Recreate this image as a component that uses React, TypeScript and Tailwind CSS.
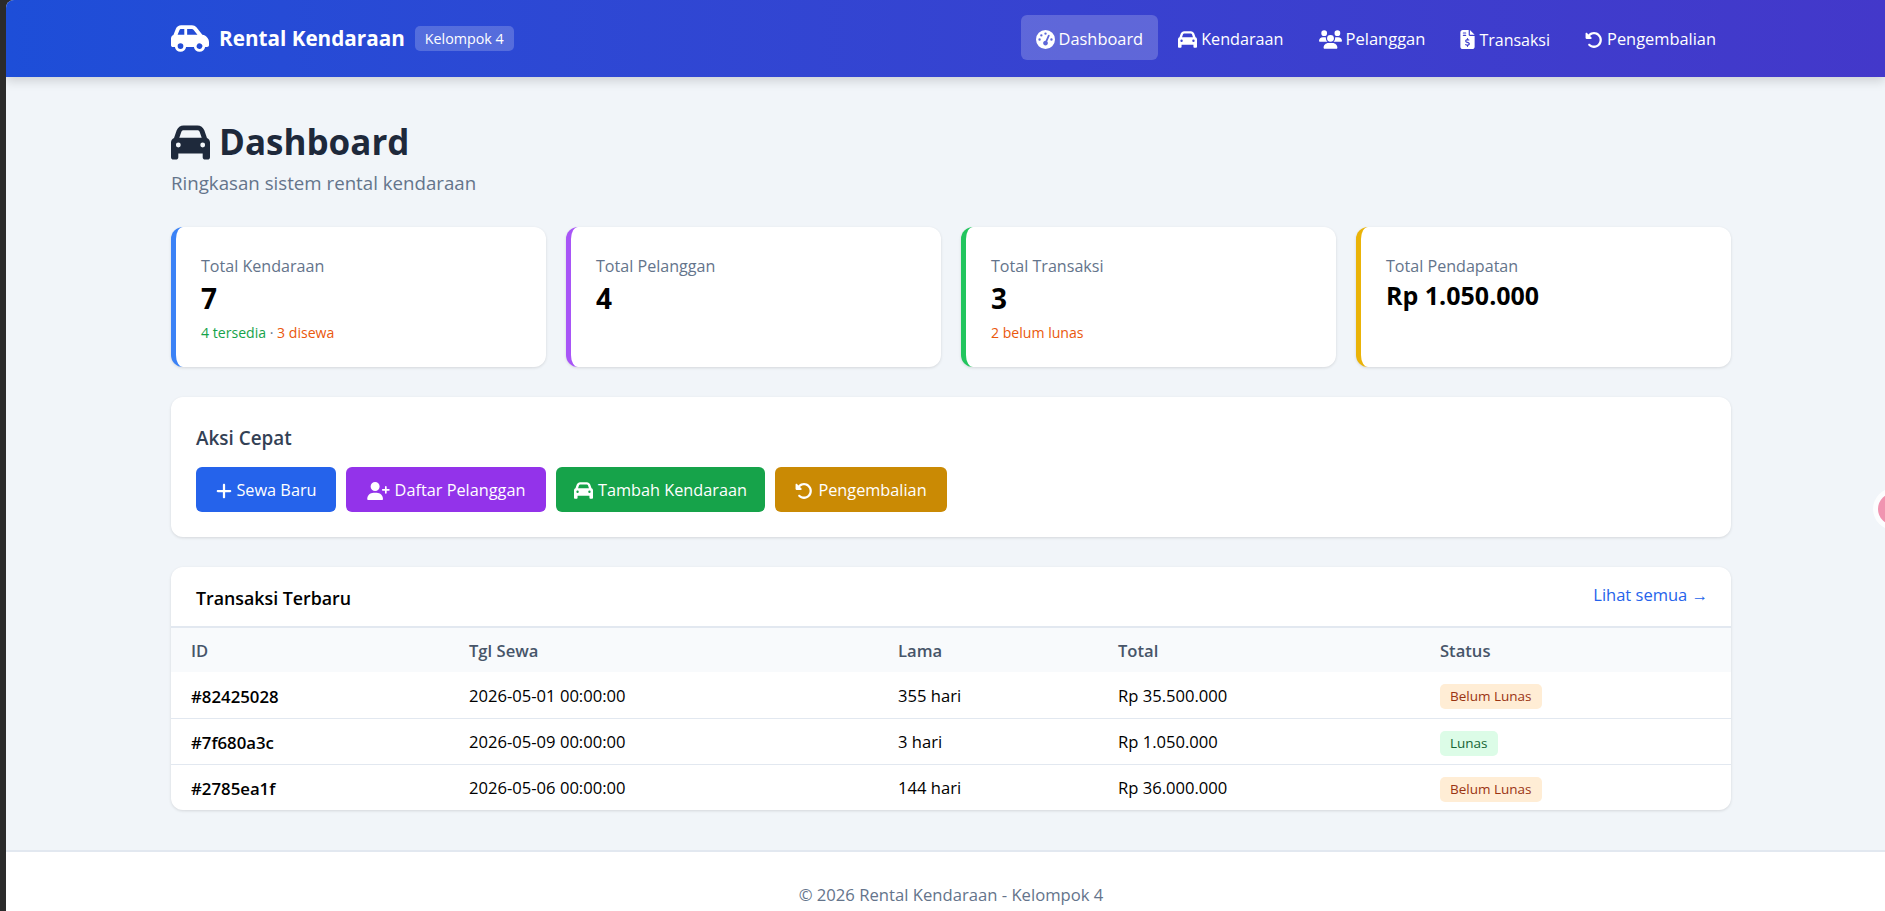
import { FaCar, FaCarSide, FaFileInvoiceDollar, FaGaugeHigh, FaPlus, FaRotateLeft, FaUserPlus, FaUsers } from "react-icons/fa6"

const navItems = [
  { label: "Dashboard", icon: <FaGaugeHigh className="size-[19px]" />, active: true, text: "text-[16.4px]" },
  { label: "Kendaraan", icon: <FaCar className="size-[19px]" />, text: "text-[16.2px]" },
  { label: "Pelanggan", icon: <FaUsers className="w-[23px] h-[19px]" />, text: "text-[16.5px]" },
  { label: "Transaksi", icon: <FaFileInvoiceDollar className="w-[15px] h-[19px]" />, text: "text-[16px]" },
  { label: "Pengembalian", icon: <FaRotateLeft className="size-[18px]" />, text: "text-[16.4px]" },
]

const rows = [
  { id: "#82425028", date: "2026-05-01 00:00:00", days: "355 hari", total: "Rp 35.500.000", paid: false },
  { id: "#7f680a3c", date: "2026-05-09 00:00:00", days: "3 hari", total: "Rp 1.050.000", paid: true },
  { id: "#2785ea1f", date: "2026-05-06 00:00:00", days: "144 hari", total: "Rp 36.000.000", paid: false },
]

function StatCard({ title, value, border, small, children }: { title: string; value: string; border: string; small?: boolean; children?: React.ReactNode }) {
  return (
    <div className={`h-[140px] rounded-xl border-l-[5px] bg-white pl-[25px] pt-[26px] shadow-[0_1px_3px_rgba(0,0,0,0.12)] ${border}`}>
      <div className="text-[16.1px] leading-[26px] text-[#64748b]">{title}</div>
      {small ? (
        <div className="text-[25px] leading-[32px] font-bold text-black">{value}</div>
      ) : (
        <div className="text-[28px] leading-[38px] font-bold text-black">{value}</div>
      )}
      <div className="mt-[6px] text-[14.1px] leading-[20px]">{children}</div>
    </div>
  )
}

export default function App() {
  return (
    <div className="relative flex h-[911px] w-full overflow-hidden bg-[#2b2b2b] font-['Open_Sans',sans-serif]">
      <div className="w-[6px] shrink-0" />
      <div className="flex min-w-0 flex-1 flex-col overflow-hidden rounded-tl-lg bg-[#f1f5f9]">
        <header className="relative flex h-[77px] shrink-0 items-center bg-gradient-to-r from-[#1d4ed8] to-[#4338ca] pl-[165px] pr-[154px] text-white shadow-[0_4px_10px_rgba(0,0,0,0.15)]">
          <FaCarSide className="h-[33px] w-[38px]" />
          <span className="ml-[10px] text-[20.7px] font-bold">Rental Kendaraan</span>
          <span className="ml-[10px] rounded-[5px] bg-white/20 px-[10px] py-[3px] text-[14.3px] leading-[19px]">Kelompok 4</span>
          <nav className="mb-[2px] ml-auto flex gap-[5px]">
            {navItems.map((item) => (
              <a key={item.label} className={`flex h-[45px] items-center gap-[4px] rounded-md px-[15px] pt-[4px] ${item.text} ${item.active ? "bg-white/20" : ""}`}>
                {item.icon}
                {item.label}
              </a>
            ))}
          </nav>
        </header>

        <main className="flex-1 pl-[165px] pt-[43px]">
          <div className="w-[1560px]">
            <h1 className="flex h-[44px] items-center gap-[9px] text-[35px] font-bold text-[#1e293b]">
              <FaCar className="size-[39px] shrink-0" />
              Dashboard
            </h1>
            <p className="mt-[5px] text-[18.7px] leading-[28px] text-[#64748b]">Ringkasan sistem rental kendaraan</p>

            <div className="mt-[30px] grid grid-cols-4 gap-[20px]">
              <StatCard title="Total Kendaraan" value="7" border="border-[#3b82f6]">
                <span className="text-[#16a34a]">4 tersedia</span>
                <span className="text-[#64748b]"> · </span>
                <span className="text-[#ea580c]">3 disewa</span>
              </StatCard>
              <StatCard title="Total Pelanggan" value="4" border="border-[#a855f7]" />
              <StatCard title="Total Transaksi" value="3" border="border-[#22c55e]">
                <span className="text-[#ea580c]">2 belum lunas</span>
              </StatCard>
              <StatCard title="Total Pendapatan" value="Rp 1.050.000" border="border-[#eab308]" small />
            </div>

            <section className="mt-[30px] h-[140px] rounded-xl bg-white px-[25px] pt-[27px] shadow-[0_1px_3px_rgba(0,0,0,0.12)]">
              <h2 className="text-[18.9px] leading-[28px] font-semibold text-[#334155]">Aksi Cepat</h2>
              <div className="mt-[15px] flex gap-[10px] text-[16.3px] text-white">
                <button className="flex h-[45px] w-[140px] items-center justify-center gap-[3px] rounded-md bg-[#2563eb] pt-[2px]"><FaPlus className="size-[18px]" />Sewa Baru</button>
                <button className="flex h-[45px] w-[200px] items-center justify-center gap-[5px] rounded-md bg-[#9333ea] pt-[2px]"><FaUserPlus className="h-[18px] w-[23px]" />Daftar Pelanggan</button>
                <button className="flex h-[45px] w-[209px] items-center justify-center gap-[5px] rounded-md bg-[#16a34a] pt-[2px]"><FaCar className="size-[19px]" />Tambah Kendaraan</button>
                <button className="flex h-[45px] w-[172px] items-center justify-center gap-[5px] rounded-md bg-[#ca8a04] pt-[2px]"><FaRotateLeft className="size-[18px]" />Pengembalian</button>
              </div>
            </section>

            <section className="mt-[30px] overflow-hidden rounded-xl bg-white shadow-[0_1px_3px_rgba(0,0,0,0.12)]">
              <div className="flex h-[61px] items-center justify-between border-b-2 border-[#e2e8f0] pl-[25px] pr-[23px]">
                <h2 className="pt-[3px] text-[17.8px] font-semibold text-black">Transaksi Terbaru</h2>
                <a className="mb-[3px] text-[16.5px] text-[#2563eb]">Lihat semua →</a>
              </div>
              <table className="w-full table-fixed border-collapse text-left text-[16.6px] text-black">
                <colgroup>
                  <col className="w-[278px]" />
                  <col className="w-[429px]" />
                  <col className="w-[220px]" />
                  <col className="w-[322px]" />
                  <col />
                </colgroup>
                <thead>
                  <tr className="h-[44px] bg-[#f8fafc] text-[#475569]">
                    <th className="pl-[20px] pt-[3px] font-semibold">ID</th>
                    <th className="pl-[20px] pt-[3px] font-semibold">Tgl Sewa</th>
                    <th className="pl-[20px] pt-[3px] font-semibold">Lama</th>
                    <th className="pl-[20px] pt-[3px] font-semibold">Total</th>
                    <th className="pl-[20px] pt-[3px] font-semibold">Status</th>
                  </tr>
                </thead>
                <tbody>
                  {rows.map((row, i) => (
                    <tr key={row.id} className={i < rows.length - 1 ? "h-[46px] border-b border-[#e2e8f0]" : "h-[46px]"}>
                      <td className="pl-[20px] pt-[3px] text-[16.8px] font-semibold">{row.id}</td>
                      <td className="pl-[20px] pt-[3px]">{row.date}</td>
                      <td className="pl-[20px] pt-[3px]">{row.days}</td>
                      <td className="pl-[20px] pt-[3px]">{row.total}</td>
                      <td className="pl-[20px] pt-[3px]">
                        {row.paid ? (
                          <span className="inline-block rounded-[5px] bg-[#dcfce7] px-[10px] text-[13.5px] leading-[25px] text-[#166534]">Lunas</span>
                        ) : (
                          <span className="inline-block rounded-[5px] bg-[#ffedd5] px-[10px] text-[13.5px] leading-[25px] text-[#9a3412]">Belum Lunas</span>
                        )}
                      </td>
                    </tr>
                  ))}
                </tbody>
              </table>
            </section>
          </div>
        </main>

        <footer className="h-[61px] shrink-0 border-t-2 border-[#e2e8f0] bg-white pl-[11px] pt-[31px] text-center text-[16.65px] leading-[24px] text-[#64748b]">
          © 2026 Rental Kendaraan - Kelompok 4
        </footer>
      </div>
      <div className="absolute left-[1878px] top-[493px] size-[32px] rounded-full bg-[#f094b0] shadow-[0_0_0_5px_rgba(255,255,255,0.8)]" />
    </div>
  )
}
